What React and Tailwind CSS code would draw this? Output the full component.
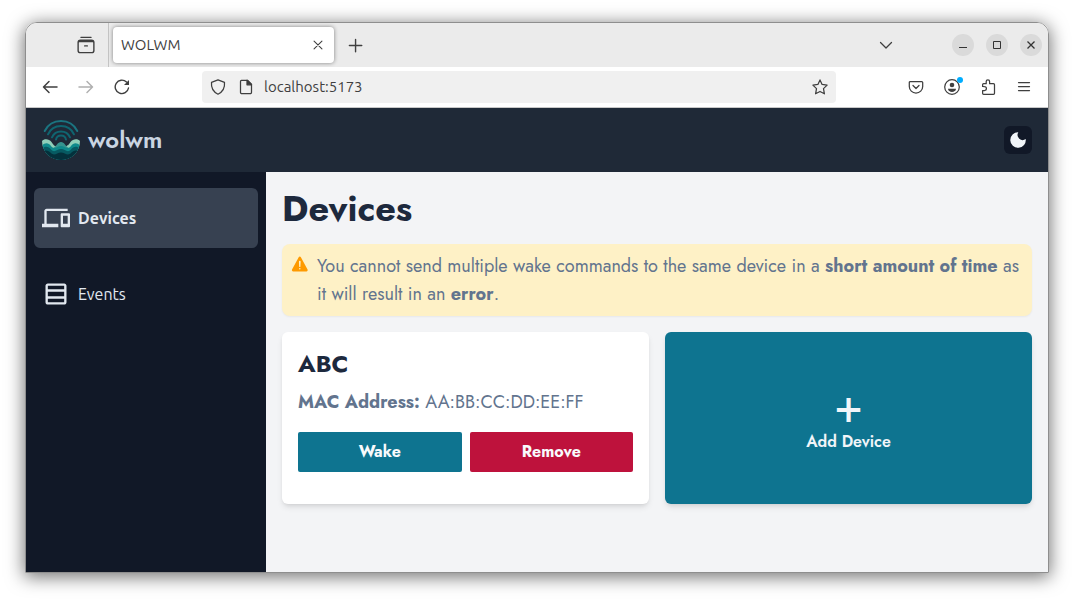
import { IoWarning } from "react-icons/io5";
import { MdDevices, MdOutlineTableRows } from "react-icons/md";

const chromeFont = "font-['Ubuntu','Open_Sans',sans-serif]";
const appFont = "font-['Jost','Lato',sans-serif]";

function Icon({ children, size = 16, className = "" }) {
  return (
    <svg
      width={size}
      height={size}
      viewBox="0 0 16 16"
      fill="none"
      stroke="currentColor"
      strokeWidth="1.25"
      strokeLinecap="round"
      strokeLinejoin="round"
      className={className}
      aria-hidden="true"
    >
      {children}
    </svg>
  );
}

function Logo() {
  return (
    <svg width="38" height="40" viewBox="1 0 38 40" fill="none" aria-hidden="true">
      <defs>
        <clipPath id="sea">
          <path d="M1 16H39V21A19 19 0 0 1 1 21Z" />
        </clipPath>
      </defs>
      <g stroke="#0f6570" strokeWidth="2" strokeLinecap="round">
        <path d="M3.700 11A18.300 18.300 0 0 1 36.300 11" stroke="#1b7480" />
        <path d="M7 14.300A14.300 14.300 0 0 1 33 14.300" />
        <path d="M11 17.300A9.900 9.900 0 0 1 29 17.300" />
        <path d="M15 19.600A5.100 5.100 0 0 1 25 19.600" />
      </g>
      <g clipPath="url(#sea)">
        <path d="M1 21C3 18.500 8 18.500 10.500 22C13 25.500 13 26 15 26H25C27 26 27 25.500 29.500 22C32 18.500 37 18.500 39 21V40H1Z" fill="#8fcfb9" />
        <path d="M12 28C16 26 16.500 22 20 22S24 26 28 28L24 32H16Z" fill="#36948f" />
        <path d="M1 25.500C4 22.500 7.500 22.500 10 26C13.500 30.500 16 26 20 26S26.500 30.500 30 26C32.500 22.500 36 22.500 39 25.500V40H1Z" fill="#0f8a8b" />
        <path d="M1 28.500C4 26 7.500 26 10 29.500C13.500 33.500 16 29 20 29S26.500 33.500 30 29.500C32.500 26 36 26 39 28.500V40H1Z" fill="#075a62" />
        <path d="M1 32C4 29.500 7.500 30 10 33C13.500 36.500 16 32.500 20 32.500S26.500 36.500 30 33C32.500 30 36 29.500 39 32V40H1Z" fill="#04313c" />
      </g>
    </svg>
  );
}

function TabStrip() {
  return (
    <div className="flex h-11 items-center bg-[#ebebeb] text-[#3f3f3f]">
      <div className="flex h-full w-[83px] items-center justify-end border-r border-[#c4c4c4] pr-3">
        <button type="button" aria-label="Recent browsing" className="p-px">
          <Icon size={18}>
            <path d="M3.500 1.200H12.500" />
            <rect x="1" y="3.800" width="14" height="11" rx="2" />
            <path d="M1.500 5H14.500" strokeWidth="1" />
            <path d="M6.800 8.800H9.200" />
          </Icon>
        </button>
      </div>
      <div className="ml-1 flex h-9 w-[221px] items-center justify-between rounded bg-white pr-2 pl-2 shadow-[0_0_4px_rgba(0,0,0,0.45)]">
        <span className="text-[15px]">WOLWM</span>
        <button type="button" aria-label="Close tab" className="p-px">
          <Icon size={14}>
            <path d="M3.500 3.500L12.500 12.500M12.500 3.500L3.500 12.500" />
          </Icon>
        </button>
      </div>
      <button type="button" aria-label="New tab" className="ml-3">
        <Icon size={18}>
          <path d="M8.500 3V14M3 8.500H14" />
        </Icon>
      </button>
      <button type="button" aria-label="List all tabs" className="mr-[58px] ml-auto">
        <Icon>
          <path d="M2.500 5.500L8 11L13.500 5.500" />
        </Icon>
      </button>
      <div className="flex gap-3 pr-[6px]">
        <button type="button" aria-label="Minimize" className="flex size-[22px] items-center justify-center rounded-full bg-[#dadada]">
          <svg width="8" height="8" viewBox="0 0 8 8" aria-hidden="true"><path d="M0 6.500H8" stroke="#333" /></svg>
        </button>
        <button type="button" aria-label="Maximize" className="flex size-[22px] items-center justify-center rounded-full bg-[#dadada]">
          <svg width="8" height="8" viewBox="0 0 8 8" fill="none" aria-hidden="true"><path d="M.5 .5H7.500V7.500H.5Z" stroke="#333" /></svg>
        </button>
        <button type="button" aria-label="Close" className="flex size-[22px] items-center justify-center rounded-full bg-[#dadada]">
          <svg width="8" height="8" viewBox="0 0 8 8" aria-hidden="true"><path d="M.5 .5L7.500 7.500M7.500 .5L.5 7.500" stroke="#333" strokeWidth="1.300" /></svg>
        </button>
      </div>
    </div>
  );
}

function Toolbar() {
  return (
    <div className="flex h-[41px] items-center border-b border-[#c8c8c8] bg-white text-[#3f3f3f]">
      <div className="flex w-44 gap-5 pl-4">
        <button type="button" aria-label="Back">
          <Icon><path d="M15 8H1.500M7 2.500L1.500 8L7 13.500" strokeWidth="1.500" /></Icon>
        </button>
        <button type="button" aria-label="Forward" disabled className="text-[#b0b0b0]">
          <Icon><path d="M1 8H14.500M9 2.500L14.500 8L9 13.500" strokeWidth="1.500" /></Icon>
        </button>
        <button type="button" aria-label="Reload">
          <Icon>
            <path d="M14.500 9A6.700 6.700 0 1 1 12.500 3" strokeWidth="1.400" />
            <path d="M15 1V6H10Z" fill="currentColor" stroke="none" />
          </Icon>
        </button>
      </div>
      <div className="flex h-8 min-w-0 flex-1 items-center rounded bg-[#f0f0f0] px-2">
        <Icon className="shrink-0">
          <path d="M8 .8L14.500 3.300C15 8.500 12.500 13 8 15.200C3.500 13 1 8.500 1.500 3.300Z" />
        </Icon>
        <Icon className="ml-3 shrink-0">
          <path d="M3.500 1.300H9.500L13.500 5.300V13.300A1.300 1.300 0 0 1 12.200 14.700H3.800A1.300 1.300 0 0 1 2.500 13.300V2.500A1.200 1.200 0 0 1 3.500 1.300Z" />
          <path d="M9 1.300V5.800H13.500Z" fill="currentColor" />
        </Icon>
        <input
          type="text"
          aria-label="Address"
          defaultValue="localhost:5173"
          className="ml-[10px] min-w-0 flex-1 bg-transparent text-[15px] outline-none"
        />
        <button type="button" aria-label="Bookmark this page">
          <Icon>
            <path d="M8 .9L10.100 5.400L15.100 6.100L11.500 9.600L12.400 14.800L8 12.500L3.600 14.800L4.500 9.600L.9 6.100L5.900 5.400Z" />
          </Icon>
        </button>
      </div>
      <div className="ml-[72px] flex gap-5 pr-4">
        <button type="button" aria-label="Save to Pocket">
          <Icon>
            <path d="M2.300 2.500H13.700A1 1 0 0 1 14.700 3.500V7.500A6.700 6.500 0 0 1 1.300 7.500V3.500A1 1 0 0 1 2.300 2.500Z" />
            <path d="M5 6.500L8 9.500L11 6.500" />
          </Icon>
        </button>
        <button type="button" aria-label="Account" className="relative">
          <Icon>
            <circle cx="8" cy="8" r="7.300" />
            <circle cx="8" cy="6" r="2.300" fill="currentColor" stroke="none" />
            <path d="M4 9.800H12C12 14 4 14 4 9.800Z" fill="currentColor" stroke="none" />
          </Icon>
          <span className="absolute -top-[2px] -right-[3px] size-[6px] rounded-full bg-[#00adff]" />
        </button>
        <button type="button" aria-label="Extensions">
          <Icon>
            <path d="M2.600 7.500V5.700A1 1 0 0 1 3.600 4.700H6.200V2.600A1.600 1.600 0 0 1 9.600 2.600V4.700H13.500A1 1 0 0 1 14.500 5.700V14.300A1 1 0 0 1 13.500 15.300H3.600A1 1 0 0 1 2.600 14.300V11.500H4.500A1.900 1.900 0 0 0 4.500 7.700Z" />
          </Icon>
        </button>
        <button type="button" aria-label="Open menu">
          <Icon><path d="M2.500 3.500H13.500M2.500 7.500H13.500M2.500 11.500H13.500" /></Icon>
        </button>
      </div>
    </div>
  );
}

function AppHeader() {
  return (
    <header className="flex h-16 items-center justify-between bg-[#1f2937] px-4">
      <a href="#" className="flex items-center gap-2 text-2xl font-semibold text-slate-300">
        <Logo />
        <span className={appFont}>wolwm</span>
      </a>
      <button type="button" aria-label="Toggle dark mode" className="flex size-7 items-center justify-center rounded-md bg-[#111827] text-slate-100">
        <svg width="16" height="16" viewBox="0 0 16 16" fill="currentColor" aria-hidden="true">
          <path d="M8.300 .3A7.750 7.750 0 1 0 15.700 7A5.100 5.100 0 0 1 8.300 .3Z" />
        </svg>
      </button>
    </header>
  );
}

function Sidebar() {
  return (
    <nav className="flex w-60 shrink-0 flex-col gap-4 bg-[#111827] px-2 py-4 text-base text-slate-200">
      <a href="#devices" className="flex h-[60px] items-center gap-2 rounded-md bg-[#374151] px-2 font-semibold">
        <MdDevices size={28} />
        Devices
      </a>
      <a href="#events" className="flex h-[60px] items-center gap-2 rounded-md px-2">
        <MdOutlineTableRows size={28} />
        Events
      </a>
    </nav>
  );
}

function DevicesPage() {
  return (
    <main className={`min-w-0 flex-1 bg-[#f3f4f6] p-4 ${appFont}`}>
      <h1 className="text-4xl font-bold text-slate-800">Devices</h1>
      <div role="alert" className="mt-4 flex gap-[7px] rounded-lg bg-[#fef1c6] p-2 text-lg text-slate-500 shadow-xs">
        <IoWarning size={20} className="mt-[2px] shrink-0 text-amber-500" />
        <p>
          You cannot send multiple wake commands to the same device in a <strong>short amount of time</strong> as it
          will result in an <strong>error</strong>.
        </p>
      </div>
      <div className="mt-4 grid grid-cols-2 gap-4">
        <section className="rounded-md bg-white p-4 shadow-md">
          <h2 className="text-2xl font-bold text-slate-800">ABC</h2>
          <p className="mt-2 text-lg text-slate-500">
            <strong>MAC Address:</strong> AA:BB:CC:DD:EE:FF
          </p>
          <div className="my-4 grid grid-cols-2 gap-2 text-base font-bold text-slate-50">
            <button type="button" className="h-10 rounded-xs bg-[#0e7490]">Wake</button>
            <button type="button" className="h-10 rounded-xs bg-[#be123c]">Remove</button>
          </div>
        </section>
        <button type="button" className="flex flex-col items-center justify-center rounded-md bg-[#0e7490] text-slate-100 shadow-md">
          <span className="text-5xl">+</span>
          <span className="text-base font-semibold">Add Device</span>
        </button>
      </div>
    </main>
  );
}

export default function App() {
  return (
    <div className="flex min-h-screen bg-white px-[25px] pt-[22px] pb-7">
      <div className={`flex min-w-0 flex-1 flex-col overflow-hidden rounded-t-xl border border-[#8e8e8e] shadow-[0_3px_18px_1px_rgba(0,0,0,0.55)] ${chromeFont}`}>
        <TabStrip />
        <Toolbar />
        <AppHeader />
        <div className="flex flex-1">
          <Sidebar />
          <DevicesPage />
        </div>
      </div>
    </div>
  );
}
